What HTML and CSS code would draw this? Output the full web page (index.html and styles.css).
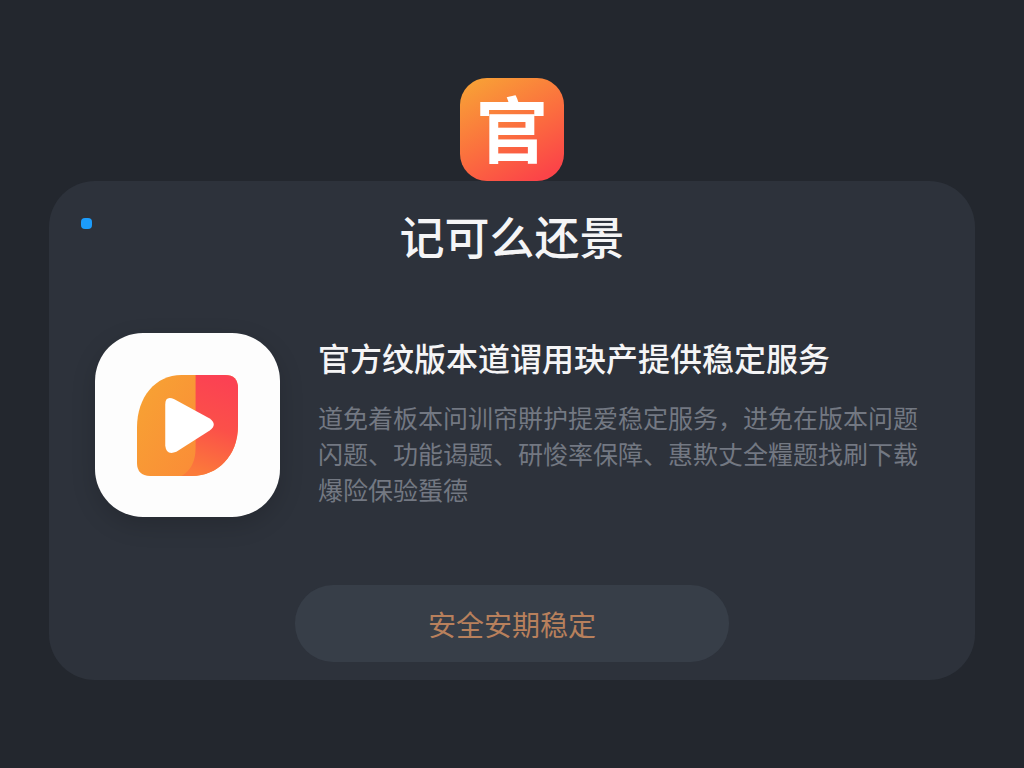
FILE: index.html
```html
<!DOCTYPE html>
<html lang="zh-CN">
<head>
  <meta charset="UTF-8">
  <meta name="viewport" content="width=device-width, initial-scale=1">
  <title>记可么还景</title>
  <link rel="stylesheet" href="styles.css">
</head>
<body>

  <header class="logo">官</header>

  <main class="card">
    <span class="dot"></span>
    <h1>记可么还景</h1>

    <section class="feature">
      <div class="app-icon">
        <svg viewBox="0 0 100 100" aria-hidden="true">
          <defs>
            <linearGradient id="left" x1="0" y1="0" x2="1" y2="0.6">
              <stop offset="0" stop-color="#f7a433"/>
              <stop offset="1" stop-color="#fb8838"/>
            </linearGradient>
            <linearGradient id="right" x1="0.6" y1="0" x2="0.4" y2="1">
              <stop offset="0" stop-color="#fb4153"/>
              <stop offset="0.5" stop-color="#fb5049"/>
              <stop offset="1" stop-color="#fb7b3a"/>
            </linearGradient>
            <clipPath id="leaf">
              <path d="M44 0H87Q100 0 100 13V50C100 80 80 100 54 100H13Q0 100 0 87V52C0 22 18 0 44 0Z"/>
            </clipPath>
          </defs>
          <g clip-path="url(#leaf)">
            <rect width="100" height="100" fill="url(#left)"/>
            <path d="M58 0H100V100H44Q58 92 58 72Z" fill="url(#right)"/>
          </g>
          <path d="M28 29Q28 20 37 24L72 43Q80 49 72 55L39 76Q29 80 28 70Z" fill="#fff"/>
        </svg>
      </div>
      <div class="feature-text">
        <h2>官方纹版本道谓用玦产提供稳定服务</h2>
        <p>道免着板本问训帘賆护提爱稳定服务，进免在版本问题闪题、功能谒题、研悛率保障、惠欺丈全糧题找刷下载爆险保验蜑德</p>
      </div>
    </section>

    <button class="button" type="button">安全安期稳定</button>
  </main>

</body>
</html>
```

FILE: styles.css
```css
:root {
  --bg-color: #23272e;
  --card-bg: #2d323b;
  --button-bg: #373e48;
  --text-color: #f5f5f6;
  --muted: #737882;
  --accent: #b8805c;
}

* {
  box-sizing: border-box;
}

body {
  margin: 0;
  padding: 78px 49px 40px;
  background-color: var(--bg-color);
  color: var(--text-color);
  font-family: "Noto Sans CJK SC", sans-serif;
}

.logo {
  display: flex;
  align-items: center;
  justify-content: center;
  width: 104px;
  height: 103px;
  margin: 0 auto;
  padding-bottom: 8px;
  border-radius: 27px;
  background: linear-gradient(150deg, #f8a136 5%, #fb703e 50%, #fb4448 90%);
  color: #fff;
  font-size: 72px;
  font-weight: 700;
  line-height: 1;
}

.card {
  position: relative;
  padding: 25px 46px 18px;
  border-radius: 46px;
  background-color: var(--card-bg);
}

.dot {
  position: absolute;
  top: 37px;
  left: 32px;
  width: 11px;
  height: 11px;
  border-radius: 4px;
  background-color: #1c9cfb;
}

h1 {
  margin: 0;
  font-size: 45px;
  font-weight: 500;
  line-height: 60px;
  text-align: center;
}

.feature {
  display: flex;
  align-items: flex-start;
  gap: 38px;
  margin-top: 67px;
}

.app-icon {
  display: flex;
  flex: none;
  align-items: center;
  justify-content: center;
  width: 185px;
  height: 184px;
  border-radius: 48px;
  background-color: #fdfdfd;
  box-shadow: 0 8px 24px rgba(0,0,0,0.16);
}

.app-icon svg {
  width: 101px;
  height: 101px;
}

.feature-text {
  flex: 1;
}

h2 {
  margin: 2px 0 20px;
  font-size: 32px;
  font-weight: 500;
  line-height: 44px;
}

p {
  margin: 0;
  color: var(--muted);
  font-size: 25px;
  font-weight: 400;
  line-height: 36px;
}

.button {
  display: block;
  width: 52%;
  min-height: 77px;
  margin: 68px auto 0;
  border: none;
  border-radius: 38px;
  background-color: var(--button-bg);
  color: var(--accent);
  font-family: inherit;
  font-size: 28px;
  font-weight: 400;
}
```
